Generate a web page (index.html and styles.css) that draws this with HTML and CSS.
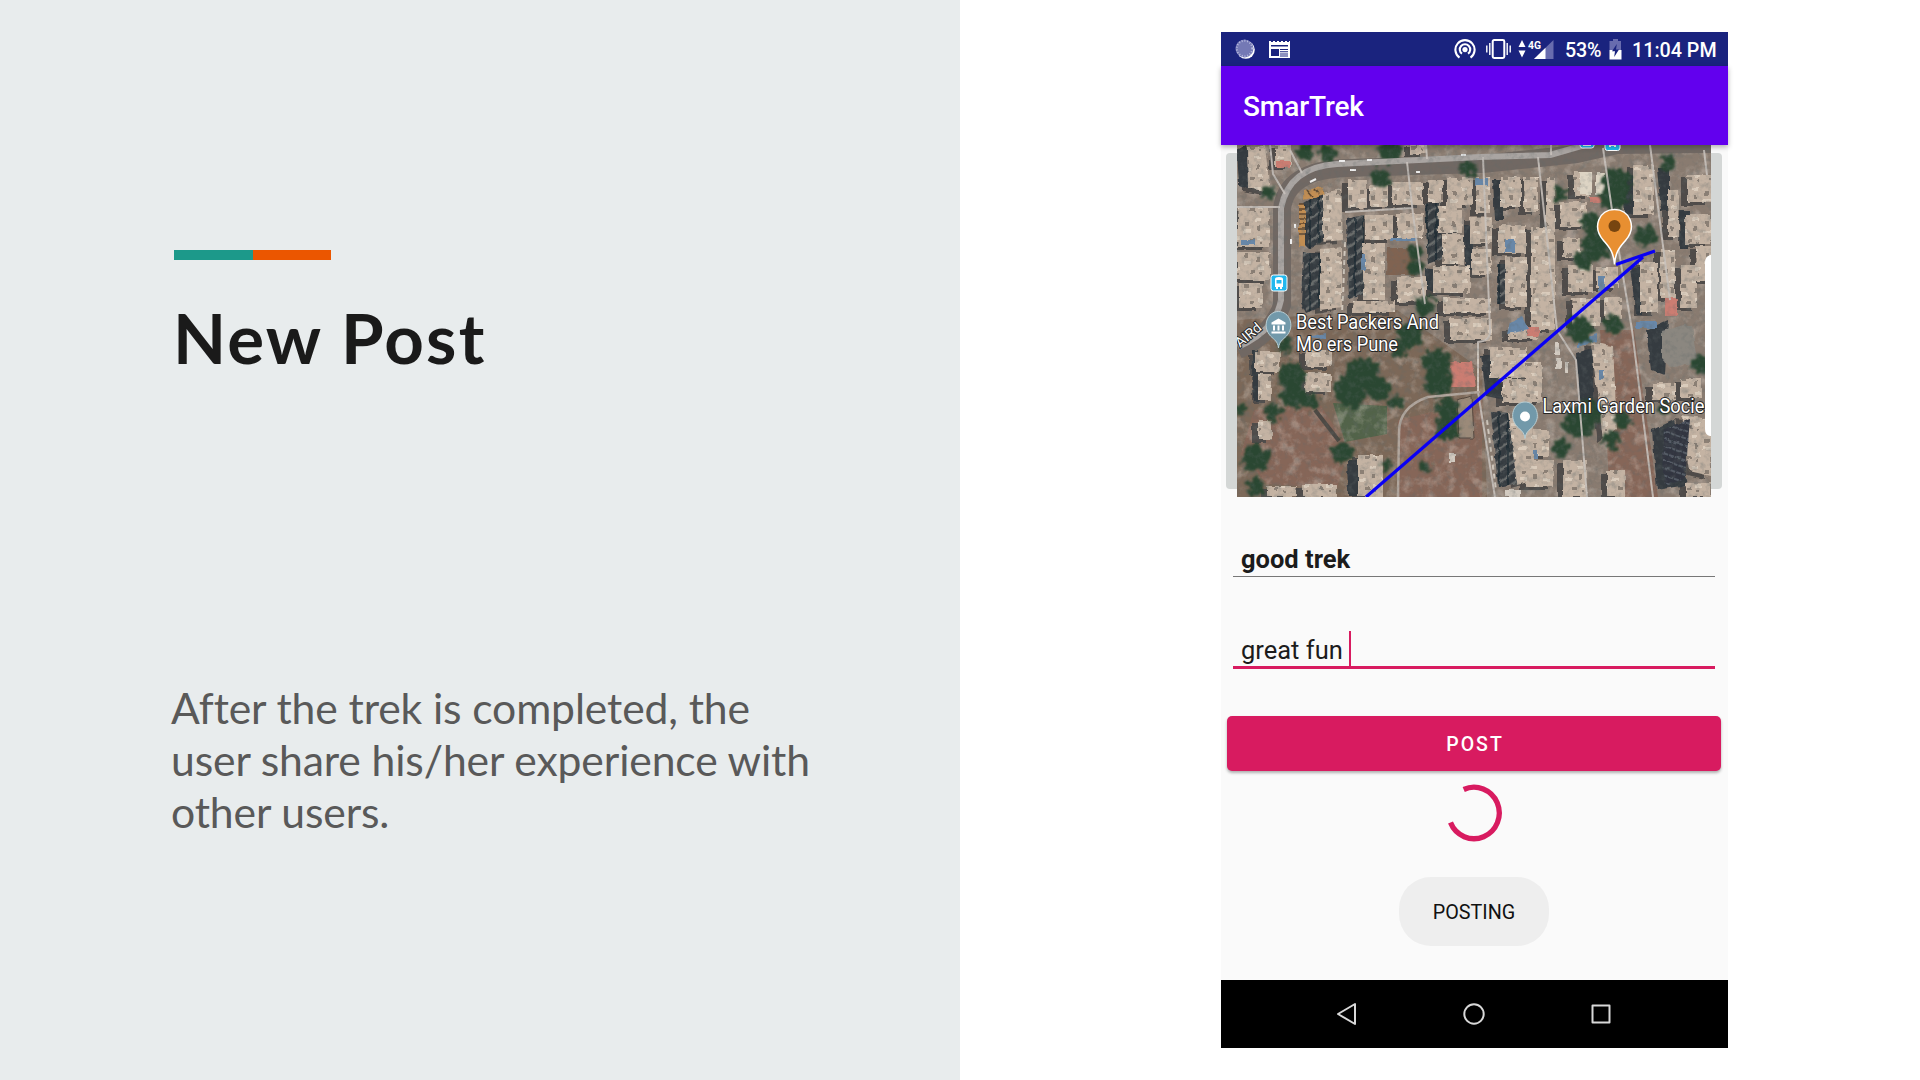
FILE: index.html
```html
<!DOCTYPE html>
<html lang="en">
<head>
<meta charset="utf-8">
<title>New Post</title>
<link rel="stylesheet" href="styles.css">
</head>
<body>
<main class="slide">
  <section class="intro">
    <div class="accent"><span class="accent-teal"></span><span class="accent-orange"></span></div>
    <h1 class="title">New Post</h1>
    <p class="description">After the trek is completed, the<br>user share his/her experience with<br>other users.</p>
  </section>
  <section class="preview">
    <div class="phone">
      <header class="status">
        <svg class="ic-sync" width="20" height="20" viewBox="0 0 20 20"><circle cx="10.8" cy="10.8" r="9" fill="#fff"/><circle cx="9.5" cy="9.5" r="9" fill="#7479b5"/><circle cx="9.5" cy="9.5" r="7.8" fill="none" stroke="#b9bce0" stroke-width="2" stroke-dasharray="1 1.8"/></svg>
        <svg class="ic-news" width="21" height="19" viewBox="0 0 21 19"><path fill="#fff" fill-rule="evenodd" d="M0 1h2v1h2V1h2v1h2V1h2v1h2V1h2v1h2V1h2v1h2V1h1v17H0zM2 5v1.500h17V5zM2 9v7h8V9zM11 9v1h8V9zM11 11.3v1h8v-1zM11 13.4v1h8v-1zM11 15.5v1h8v-1z"/></svg>
        <svg class="ic-hotspot" width="22" height="20" viewBox="0 0 22 20"><g fill="none" stroke="#fff" stroke-width="2.1"><path d="M5.5 18.6A9.6 9.6 0 1 1 16.5 18.6"/><path d="M8 14.7A5.2 5.2 0 1 1 14 14.7"/></g><circle cx="11" cy="10.6" r="2.6" fill="#fff"/></svg>
        <svg class="ic-vibrate" width="25" height="20" viewBox="0 0 25 20"><rect x="6.7" y="1" width="11.6" height="18" rx="1.4" fill="none" stroke="#fff" stroke-width="2"/><path d="M3.8 4v12M.8 6.5v7M21.2 4v12M24.2 6.5v7" stroke="#fff" stroke-width="1.4"/></svg>
        <svg class="ic-signal" width="36" height="21" viewBox="0 0 36 21"><path d="M4 1l3.500 7h-7zM4 18.500l-3.500-7h7z" fill="#fff"/><path d="M35.500 1v19H16z" fill="#686cae"/><path d="M27.500 8.800V20H16z" fill="#fff"/><text x="10" y="9.800" textLength="13" lengthAdjust="spacingAndGlyphs" class="net">4G</text></svg>
        <span class="battery-text">53%</span>
        <svg class="ic-battery" width="13" height="21" viewBox="0 0 13 21"><path d="M4 0h5v2h3v9H.500V2H4z" fill="#686cae"/><path d="M.500 11H12.500v9.500H.500z" fill="#fff"/><path d="M7.800 5L3 12.300h3L5.200 18 10 10.600H7z" fill="#1a237e"/></svg>
        <span class="clock">11:04 PM</span>
      </header>
      <div class="appbar">SmarTrek</div>
      <div class="content">
        <div class="map-card">
          <svg class="map" width="474" height="353" viewBox="1237 144 474 353">
            <defs>
              <filter id="rough" x="-5%" y="-5%" width="110%" height="110%"><feTurbulence type="fractalNoise" baseFrequency=".12" numOctaves="2" seed="4" result="n"/><feDisplacementMap in="SourceGraphic" in2="n" scale="4" xChannelSelector="R" yChannelSelector="G"/><feGaussianBlur stdDeviation=".55"/></filter>
              <filter id="leaf" x="-10%" y="-10%" width="120%" height="120%"><feTurbulence type="fractalNoise" baseFrequency=".15" numOctaves="3" seed="8" result="n"/><feDisplacementMap in="SourceGraphic" in2="n" scale="15" xChannelSelector="R" yChannelSelector="G"/><feGaussianBlur stdDeviation=".8"/></filter>
              <filter id="grain" x="0" y="0" width="100%" height="100%"><feTurbulence type="fractalNoise" baseFrequency=".17" numOctaves="3" seed="12"/><feColorMatrix values="0 0 0 0 .12  0 0 0 0 .14  0 0 0 0 .14  1.5 1.5 0 0 -1.4"/></filter>
              <filter id="light" x="0" y="0" width="100%" height="100%"><feTurbulence type="fractalNoise" baseFrequency=".09" numOctaves="4" seed="31"/><feColorMatrix values="0 0 0 0 .78  0 0 0 0 .7  0 0 0 0 .63  2.200 2.200 0 0 -2.100"/></filter>
              <pattern id="vents" width="23" height="31" patternUnits="userSpaceOnUse"><path d="M3 5h4v4H3zM15 9h3v5h-3zM8 22h5v3H8zM18 25h2v2h-2z" fill="#82776c"/><path d="M1 13h8v3H1zM13 1h6v3h-6zM16 19h5v4h-5z" fill="#ded0c0"/></pattern>
              <pattern id="lattice" width="6" height="7" patternUnits="userSpaceOnUse" patternTransform="rotate(18)"><path d="M0 0h6v7H0z" fill="#30353f"/><path d="M0 1h5" stroke="#77808b"/></pattern>
              <pattern id="walls" width="9" height="11" patternUnits="userSpaceOnUse" patternTransform="skewY(-35)"><path d="M0 3h9" stroke="#6b6d6c" stroke-width="3"/><path d="M5 0v11" stroke="#1f2b33" stroke-width="1.500"/></pattern>
              <g id="roofs"><path d="M1247 147l18-2 5 47-22-4zM1238 208h31v39h-31zM1237 252h33v28h-33zM1239 283h23v25h-23zM1323 193l18-4 2 51-20 2zM1320 249l22-2v60l-22 3zM1348 180h19v28h-19zM1370 185h18v22h-18zM1392 182h31v23h-31zM1428 180h15v22h-15zM1447 178h25v27h-25zM1365 215h28v25h-28zM1397 213h26v25h-26zM1363 243h22v57h-22zM1397 277h30v25h-30zM1438 205h24v28h-24zM1442 234h22v30h-22zM1433 266h37v27h-37zM1470 217h22v27h-22zM1472 249h19v26h-19zM1353 301h42v12h-42zM1476 177h14v36h-14zM1500 177h21v30h-21zM1524 177h14v35h-14zM1546 177h9v153h-9zM1560 202h27v25h-27zM1574 172h17v24h-17zM1633 165h21v50h-21zM1668 190h11v47h-11zM1687 175h24v28h-24zM1685 214h26v30h-26zM1498 225h28v28h-28zM1505 257h22v50h-22zM1531 227h16v103h-16zM1563 238h17v20h-17zM1568 265h25v27h-25zM1596 267h22v21h-22zM1572 298h28v28h-28zM1604 297h18v22h-18zM1640 262h18v51h-18zM1660 250h15v48h-15zM1681 265h16v43h-16zM1696 246h15v35h-15zM1443 298h48v15h-48zM1450 318h42v22h-42zM1508 327h30v12h-30zM1490 347h36v31h-36zM1526 362h16v24h-16zM1502 379h40v24h-40zM1508 412l24 4 3 64-18 5zM1533 430h16v26h-16zM1526 460h27v27h-27zM1591 343l22 3 4 84-14 10zM1652 383h24v17h-24zM1681 379h20v19h-20zM1681 415l30 4v57l-22-5zM1563 460h24v37h-24zM1607 470h18v27h-18zM1686 483h25v14h-25zM1255 352h25v20h-25zM1258 374h13v26h-13zM1305 350h27v17h-27zM1305 373h26v19h-26zM1258 420h14v20h-14zM1267 486h30v11h-30zM1302 484h35v13h-35zM1358 455h25v42h-25zM1410 144h16v10h-16zM1275 145h16v22h-16z"/></g>
            </defs>
            <path d="M1237 144h474v353h-474z" fill="#897b70"/>
            <path d="M1237 320l160-10 85 60 5 127h-250z" fill="#7c6858"/>
            <path d="M1254 410l65-7 30 45-12 40-70-4-26-30zM1398 420l84-20v97h-84zM1600 330h34l24 167h-48z" fill="#866658"/>
            <path d="M1333 403l54 3v28l-42 8z" fill="#526349"/>
            <path d="M1237 144h474v353h-474z" filter="url(#light)" opacity=".3"/>
            <g fill="none" stroke-linejoin="round">
              <path d="M1238 350q34-15 44-45V210q3-40 65-42l135-4 95-10 40-9 98-1" stroke="#716863" stroke-width="18"/>
              <path d="M1315 410l24 31" stroke="#4d4944" stroke-width="4"/>
            </g>
            <g filter="url(#rough)">
              <use href="#roofs" x="-6" y="3" fill="#504b48"/>
              <path d="M1237 150l9-5 7 45-14-5zM1304 203l20-12v49l-15 9-8-8zM1303 253h17v54l-14 6-5-10zM1347 219l17-4v79l-15 5zM1425 204l14-3 4 58-15 5zM1425 268l11 2 1 24-12-6zM1464 225h9v45h-8zM1493 180h10v40h-8zM1497 264h9v40h-9zM1621 175h13v39h-10zM1657 169h13v42h-9zM1680 210h9v39h-9zM1630 267h12v48h-6zM1646 330l22-10-3 55-14-5zM1481 355h12l12 45-19-4zM1491 412l20 1 8 70-21 4zM1576 353l17-5v60l-14-3zM1252 350h6v25h-6zM1253 375h7v26h-7zM1347 460h12v36h-11zM1652 430l22-10 14 65-31 5z" fill="#353b41"/>
              <path d="M1304 203l20-12v49l-15 9zM1303 253h17v54l-14 6zM1347 219l17-4v79l-15 5zM1425 204l14-3 4 58-15 5zM1491 412l20 1 8 70-21 4zM1497 264h9v40h-9z" fill="url(#walls)"/>
              <use href="#roofs" fill="#c4b3a3"/>
              <use href="#roofs" fill="url(#vents)" opacity=".85"/>
              <path d="M1580 172h12v22h-12zM1596 172h9v22h-9z" fill="#ddd4c4"/>
              <path d="M1662 331l22-6 8 2 5 34-26 7-9-10z" fill="#8b8780"/>
              <path d="M1665 428l25-9-5 60-20 7-2-28z" fill="url(#lattice)"/>
              <path d="M1388 248h29v27h-30z" fill="#806351"/>
              <path d="M1304 191l17-4 4 7-21 6zM1299 204h6v43h-6z" fill="#c28e52"/>
              <path d="M1299 204h6M1299 209h6M1299 214h6M1299 219h6M1299 224h6M1299 229h6M1299 234h6M1307 190l5 6M1315 189l4 5" stroke="#5f462d" stroke-width="1.500"/>
              <path d="M1450 362h22l4 25h-25zM1665 298h13v18h-13zM1590 196h14v7h-14zM1277 161h13v7h-13zM1527 327h12v9h-12z" fill="#cb7d72"/>
              <path d="M1390 238h27v3h-27zM1361 254h4v17h-4zM1510 322l12-5 7 13-22 4zM1505 239h10v13h-10zM1475 178h13v7h-13zM1598 277h7v14h-7zM1578 340l19-6v7l-19 7zM1241 240h14v5h-14zM1636 321h20v7h-20zM1599 371h5v8h-5zM1534 450h4v9h-4zM1308 337l18-4v6z" fill="#6887a8"/>
              <path d="M1555 343h5v11h-5zM1556 358h5v11h-5zM1565 362h3v11h-3zM1449 453h6v9h-6zM1505 490h16v7h-16z" fill="#d3cbc1"/>
              <path d="M1457 400l15-4 2 42h-15z" fill="#9b8a79" stroke="#54473e"/>
            </g>
            <g filter="url(#leaf)" fill="#2b4633">
              <circle cx="1305" cy="152" r="8"/><circle cx="1328" cy="154" r="9"/><circle cx="1391" cy="151" r="12"/><circle cx="1270" cy="193" r="7"/><circle cx="1380" cy="178" r="10"/><circle cx="1415" cy="252" r="8"/><circle cx="1415" cy="268" r="8"/><circle cx="1617" cy="184" r="15"/><circle cx="1614" cy="197" r="13"/><circle cx="1591" cy="222" r="10"/><circle cx="1595" cy="245" r="15"/><circle cx="1584" cy="260" r="9"/><circle cx="1645" cy="236" r="11"/><circle cx="1560" cy="194" r="7"/><circle cx="1292" cy="376" r="14"/><circle cx="1293" cy="395" r="13"/><circle cx="1310" cy="401" r="9"/><circle cx="1362" cy="376" r="18"/><circle cx="1350" cy="392" r="16"/><circle cx="1378" cy="389" r="12"/><circle cx="1437" cy="363" r="14"/><circle cx="1438" cy="382" r="14"/><circle cx="1447" cy="409" r="11"/><circle cx="1447" cy="428" r="12"/><circle cx="1256" cy="458" r="14"/><circle cx="1256" cy="487" r="9"/><circle cx="1273" cy="413" r="9"/><circle cx="1343" cy="452" r="11"/><circle cx="1411" cy="335" r="13"/><circle cx="1399" cy="350" r="8"/><circle cx="1425" cy="467" r="6"/><circle cx="1397" cy="402" r="7"/><circle cx="1387" cy="466" r="6"/><circle cx="1425" cy="306" r="10"/><circle cx="1580" cy="330" r="13"/><circle cx="1613" cy="325" r="10"/><circle cx="1579" cy="422" r="16"/><circle cx="1590" cy="412" r="13"/><circle cx="1561" cy="448" r="9"/><circle cx="1612" cy="440" r="9"/><circle cx="1623" cy="420" r="9"/><circle cx="1666" cy="409" r="7"/><circle cx="1701" cy="365" r="10"/><circle cx="1467" cy="168" r="8"/><circle cx="1669" cy="163" r="8"/><circle cx="1285" cy="345" r="8"/><circle cx="1240" cy="409" r="6"/>
            </g>
            <g fill="none" stroke-linejoin="round">
              <path d="M1238 347q37-16 43-47v-92q8-41 56-44l143-7 70-2 45-13" stroke="#aaa5a2" stroke-width="6"/>
              <path d="M1270 144l3 30 12 20M1290 150l12 23M1237 207h43M1407 162l6 52 12 90M1345 212l67-4M1483 157l7 173q1 11-12 12v50l17 105M1538 157l19 173 19 30 11 137M1603 148l9 62 20 120 21 167M1650 145l20 155M1704 150l3 25M1426 144l1 15M1551 144v11" stroke="#c8c1bb" stroke-width="2" opacity=".9"/>
              <path d="M1480 392l-52 5q-29 10-29 35l-1 65" stroke="#b1a69d" stroke-width="2.500"/>
              <path d="M1345 242l-2 53-1 18M1487 420l9 70M1478 350v45" stroke="#d1c8bd" stroke-width="2" stroke-dasharray="5 4"/>
              <path d="M1339 161h6M1367 160h5M1350 170h6M1310 182l6-3M1461 155h5M1416 172h4M1291 239v5M1295 224v4" stroke="#eee" stroke-width="2"/>
            </g>
            <path d="M1237 144h474v353h-474z" filter="url(#grain)" opacity=".38"/>
            <g class="stop"><rect x="1271" y="275" width="16" height="16" rx="2.500"/><path d="M1275 279q0-2 4-2t4 2v8h-1v2h-2v-2h-2v2h-2v-2h-1zM1276.500 280v3.500h5V280z" fill="#fff" stroke="none" fill-rule="evenodd"/></g>
            <g class="stop"><rect x="1580" y="134" width="14" height="14" rx="2.500"/><rect x="1605" y="136" width="15" height="14.500" rx="2.500"/><path d="M1583 144h8v2h-8zM1609 144h7v3h-2v-1h-3v1h-2z" fill="#fff" stroke="none"/></g>
            <g class="place">
              <path id="pin" d="M1278.500 348c-1-7-4-8-8-12-9-10-3-24.500 8-24.500s17 14.500 8 24.500c-4 4-7 5-8 12z"/>
              <use href="#pin" x="246.500" y="90.500"/>
            </g>
            <path d="M1271.500 322.500l7-4 7 4v2h-14zM1273 325.500h2v5h-2zM1277.500 325.500h2v5h-2zM1282 325.500h2v5h-2zM1271.500 331.500h14v2h-14z" fill="#fff"/>
            <circle cx="1525" cy="416.500" r="5" fill="#fff"/>
            <g class="labels">
              <text x="1296" y="328.500" textLength="143" lengthAdjust="spacingAndGlyphs">Best Packers And</text>
              <text x="1296" y="350.500" textLength="102" lengthAdjust="spacingAndGlyphs">Mo ers Pune</text>
              <text x="1542.500" y="412.500" textLength="162" lengthAdjust="spacingAndGlyphs">Laxmi Garden Socie</text>
              <text class="road-label" x="1240" y="348" transform="rotate(-40 1240 348)">AIRd</text>
            </g>
            <path d="M1366 497L1643 257M1616 264.500L1655 251" fill="none" stroke="#0a00f5" stroke-width="3.200"/>
            <path d="M1614.500 264.500c-1-13-5-17-11-24-12-14-4-31 11-31s23 17 11 31c-6 7-10 11-11 24z" fill="#e88f31" stroke="#fff" stroke-width="1.500"/>
            <circle cx="1614.500" cy="226" r="6" fill="#774510"/>
            <path d="M1711 255h-1q-5 2-5 7v167q0 6 5 7h1z" fill="#fff"/>
          </svg>
        </div>
        <div class="field field-title">good trek</div>
        <div class="field field-note">great fun<span class="caret"></span></div>
        <button class="post">POST</button>
        <svg class="spinner" width="60" height="60" viewBox="-30 -30 60 60"><path d="M-10.300 -23.500A25.300 25.700 0 1 1 -23.500 9.600" fill="none" stroke="#d81b60" stroke-width="5.300"/></svg>
        <div class="toast">POSTING</div>
      </div>
      <nav class="nav">
        <svg width="22" height="24" viewBox="0 0 22 24"><path d="M19 2v20L2 12z"/></svg>
        <svg width="24" height="24" viewBox="0 0 24 24"><circle cx="12" cy="12" r="9.700"/></svg>
        <svg width="22" height="24" viewBox="0 0 22 24"><path d="M2.500 3.500h17v17h-17z"/></svg>
      </nav>
    </div>
  </section>
</main>
</body>
</html>
```
FILE: styles.css
```css
* { box-sizing: border-box; }
body { margin: 0; background: #fff; }
.slide { display: grid; grid-template-columns: 960px 960px; height: 1080px; overflow: hidden; }
.intro { background: #e8eced; padding: 250px 120px 0 172px; font-family: Lato, sans-serif; }
.accent { display: flex; width: 157px; height: 10px; margin-left: 2px; }
.accent-teal { width: 79px; background: #1c998a; }
.accent-orange { flex: 1; background: #eb5600; }
.title { margin: 36px 0 0 1px; height: 84px; line-height: 84px; font-size: 69px; font-weight: 700; color: #1a1a1a; letter-spacing: 2.2px; white-space: nowrap; }
.description { margin: 302px 0 0 -1px; font-size: 42.67px; line-height: 52px; color: #595959; letter-spacing: -.12px; white-space: nowrap; }
.preview { display: flex; justify-content: flex-start; padding: 32px 0 0 261px; }
.phone { display: flex; flex-direction: column; width: 507px; height: 1016px; background: #fafafa; font-family: Roboto, sans-serif; }
.status { display: flex; align-items: center; height: 34px; padding-left: 14px; background: #1a237e; color: #fff; font-size: 19.7px; font-weight: 500; white-space: nowrap; }
.status span { padding-top: 2px; }
.status svg { flex: none; }
.ic-news { margin-left: 14px; }
.ic-hotspot { margin-left: 164px; }
.ic-vibrate { margin-left: 10px; }
.ic-signal { margin-left: 7px; }
.net { font: 700 11.5px Roboto, sans-serif; fill: #fff; }
.battery-text { width: 36px; margin-left: 11px; letter-spacing: -.2px; }
.ic-battery { margin-left: 8px; }
.clock { margin-left: 10px; }
.appbar { position: relative; z-index: 1; height: 79px; padding-left: 22px; line-height: 81px; background: #6200ee; color: #fff; font-size: 28px; font-weight: 500; letter-spacing: -.1px; box-shadow: 0 2px 5px rgba(0,0,0,.3); }
.content { display: flex; flex-direction: column; height: 835px; }
.map-card { display: flex; justify-content: center; width: 496px; height: 336px; margin: 8px 0 0 5px; background: #d4d7d6; border-radius: 4px; }
.map { flex: none; margin-top: -9px; }
.stop { fill: #22b8ee; stroke: #fff; stroke-width: 1; }
.place { fill: #7299aa; stroke: #b9cfd5; stroke-width: 1; }
.labels { font: 400 20.5px Roboto, sans-serif; fill: #fff; stroke: #262626; stroke-width: 2px; paint-order: stroke; }
.road-label { font-size: 14px; }
.field { display: flex; align-items: center; width: 482px; margin-left: 12px; padding-left: 8px; color: #1c1c1c; font-size: 25.5px; white-space: pre; }
.field-title { height: 38px; margin-top: 50px; padding-top: 2px; font-weight: 700; border-bottom: 1px solid #777; }
.field-note { height: 39px; margin-top: 53px; padding-top: 3px; border-bottom: 3px solid #d81b60; }
.caret { width: 2px; height: 35px; margin: -3px 0 0 6px; background: #d81b60; }
.post { flex: none; width: 494px; height: 55px; margin: 47px 0 0 6px; padding: 2px 0 0 2px; border: 0; border-radius: 5px; background: #d81b60; color: #fff; font: 500 19.5px Roboto, sans-serif; letter-spacing: 2px; box-shadow: 0 2px 3px rgba(0,0,0,.3); }
.spinner { flex: none; align-self: center; margin: 12px 1px 0 0; }
.toast { align-self: center; width: 150px; height: 69px; margin: 34px 1px 0 0; border-radius: 32px; background: #eee; color: #111; font-size: 19.8px; line-height: 72px; text-align: center; }
.nav { display: flex; align-items: center; justify-content: center; gap: 104px; height: 68px; padding-right: 2px; background: #000; }
.nav svg { fill: none; stroke: #d8d8d8; stroke-width: 2; stroke-linejoin: round; }
```
